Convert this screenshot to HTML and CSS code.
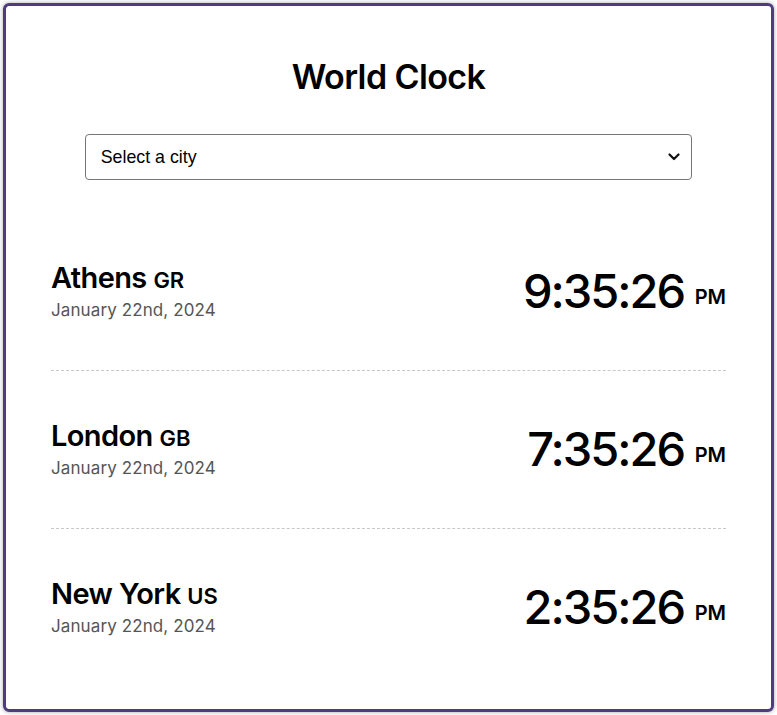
FILE: index.html
```html
<!DOCTYPE html>
<html>
<head>
<meta charset="utf-8">
<link rel="stylesheet" href="styles.css">
</head>
<body>
<div class="card">
  <h1 class="title">World Clock</h1>
  <div class="select-wrap">
    <select class="city-select">
      <option>Select a city</option>
    </select>
    <svg class="chev" width="12" height="8" viewBox="0 0 12 8"><path d="M1.5 1.5 L6 6 L10.5 1.5" fill="none" stroke="#111" stroke-width="2.2" stroke-linecap="round" stroke-linejoin="round"/></svg>
  </div>
  <div class="cities">
    <div class="city">
      <div class="info">
        <div class="name">Athens <span class="cc">GR</span></div>
        <div class="date">January 22nd, 2024</div>
      </div>
      <div class="time">9:35:26 <span class="ampm">PM</span></div>
    </div>
    <div class="city">
      <div class="info">
        <div class="name">London <span class="cc">GB</span></div>
        <div class="date">January 22nd, 2024</div>
      </div>
      <div class="time">7:35:26 <span class="ampm">PM</span></div>
    </div>
    <div class="city">
      <div class="info">
        <div class="name">New York <span class="cc">US</span></div>
        <div class="date">January 22nd, 2024</div>
      </div>
      <div class="time">2:35:26 <span class="ampm">PM</span></div>
    </div>
  </div>
</div>
</body>
</html>
```
FILE: styles.css
```css
html, body { margin: 0; padding: 0; background: #fff; }
body { font-family: Inter, "Open Sans", sans-serif; color: #000; }
.card {
  margin: 3px;
  box-sizing: border-box;
  height: 709px;
  border: 3px solid #4f3c7d;
  border-radius: 6px;
  box-shadow: 0 0 4px rgba(0,0,0,0.35);
  padding: 36px 45px 0;
}
.title {
  margin: 0;
  text-align: center;
  font-size: 34px;
  font-weight: 600;
  line-height: 70px;
  letter-spacing: -0.6px;
}
.select-wrap { position: relative; width: 90%; margin: 22px auto 0; }
.city-select {
  appearance: none;
  -webkit-appearance: none;
  width: 100%;
  height: 46px;
  border: 1px solid #767676;
  border-radius: 4px;
  background: #fff;
  font-family: "Liberation Sans", Arial, sans-serif;
  font-size: 17.8px;
  color: #000;
  padding: 0 15px;
}
.chev { position: absolute; right: 12px; top: 19px; pointer-events: none; }
.cities { margin-top: 33px; }
.city {
  display: flex;
  justify-content: space-between;
  align-items: center;
  height: 157px;
  border-bottom: 1px dashed #c8c8c8;
}
.city:last-child { border-bottom: none; }
.name { font-size: 29px; font-weight: 600; letter-spacing: -0.6px; line-height: 32px; }
.cc { font-size: 22px; font-weight: 600; letter-spacing: 0; }
.date { font-size: 17px; color: #555; line-height: 24px; letter-spacing: 0.1px; margin-top: 2px; }
.time { font-size: 47px; font-weight: 500; letter-spacing: -2px; margin-top: -2px; }
.ampm { font-size: 20px; font-weight: 600; letter-spacing: 0; vertical-align: 4px; }
```
